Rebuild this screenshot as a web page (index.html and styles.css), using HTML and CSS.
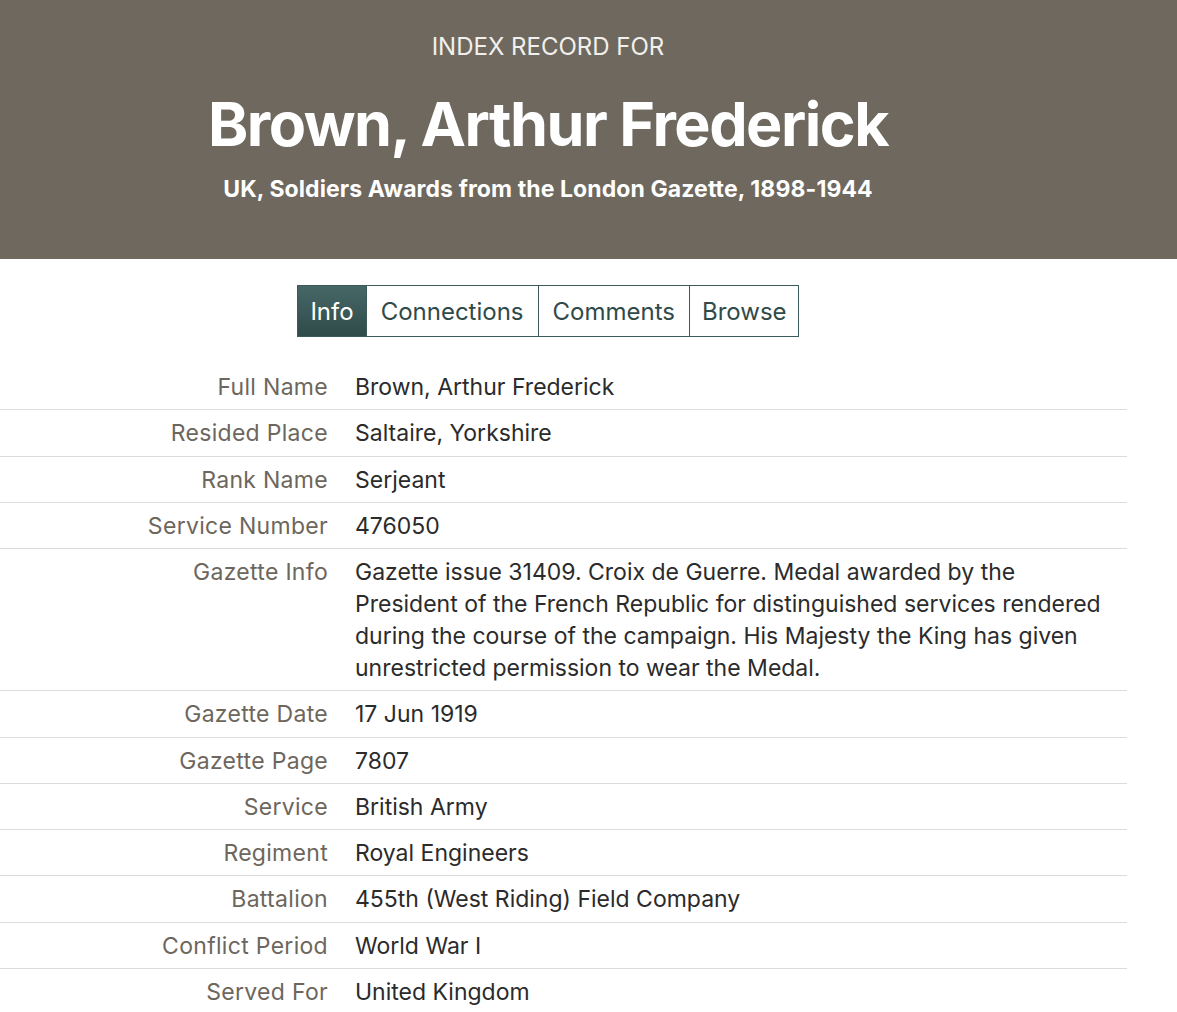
FILE: index.html
```html
<!DOCTYPE html>
<html lang="en">
<head>
<meta charset="utf-8">
<title>Brown, Arthur Frederick</title>
<link rel="stylesheet" href="styles.css">
</head>
<body>
<header class="hero">
  <div class="hero-inner">
    <p class="eyebrow">INDEX RECORD FOR</p>
    <h1 class="title">Brown, Arthur Frederick</h1>
    <p class="subtitle">UK, Soldiers Awards from the London Gazette, 1898-1944</p>
  </div>
</header>
<nav class="tabs-wrap">
  <ul class="tabs">
    <li class="tab active">Info</li>
    <li class="tab">Connections</li>
    <li class="tab">Comments</li>
    <li class="tab">Browse</li>
  </ul>
</nav>
<dl class="record">
  <div class="row"><dt>Full Name</dt><dd>Brown, Arthur Frederick</dd></div>
  <div class="row"><dt>Resided Place</dt><dd>Saltaire, Yorkshire</dd></div>
  <div class="row"><dt>Rank Name</dt><dd>Serjeant</dd></div>
  <div class="row"><dt>Service Number</dt><dd>476050</dd></div>
  <div class="row"><dt>Gazette Info</dt><dd>Gazette issue 31409. Croix de Guerre. Medal awarded by the President of the French Republic for distinguished services rendered during the course of the campaign. His Majesty the King has given unrestricted permission to wear the Medal.</dd></div>
  <div class="row"><dt>Gazette Date</dt><dd>17 Jun 1919</dd></div>
  <div class="row"><dt>Gazette Page</dt><dd>7807</dd></div>
  <div class="row"><dt>Service</dt><dd>British Army</dd></div>
  <div class="row"><dt>Regiment</dt><dd>Royal Engineers</dd></div>
  <div class="row"><dt>Battalion</dt><dd>455th (West Riding) Field Company</dd></div>
  <div class="row"><dt>Conflict Period</dt><dd>World War I</dd></div>
  <div class="row"><dt>Served For</dt><dd>United Kingdom</dd></div>
</dl>
</body>
</html>
```

FILE: styles.css
```css
* { box-sizing: border-box; }
html, body { margin: 0; padding: 0; background: #fff; }
body {
  font-family: Inter, "Liberation Sans", Arial, sans-serif;
  color: #2b2b2b;
}
.hero {
  background: #6e685e;
  height: 259px;
  color: #fff;
}
.hero-inner {
  width: 1096px;
  text-align: center;
  padding-top: 33px;
}
.eyebrow {
  margin: 0;
  font-size: 24px;
  line-height: 28px;
  font-weight: 400;
  color: #f2f0ec;
}
.title {
  margin: 27px 0 0;
  font-size: 61px;
  line-height: 72px;
  font-weight: 700;
  letter-spacing: -1.5px;
}
.subtitle {
  margin: 15px 0 0;
  font-size: 23px;
  line-height: 28px;
  font-weight: 700;
  letter-spacing: 0.1px;
}
.tabs-wrap {
  width: 1096px;
  display: flex;
  justify-content: center;
  padding-top: 26px;
}
.tabs {
  list-style: none;
  margin: 0;
  padding: 0;
  display: flex;
  border: 1px solid #3d5b5a;
}
.tab {
  height: 50px;
  display: flex;
  align-items: center;
  padding: 0 14px;
  font-size: 24px;
  color: #2f4a49;
  border-left: 1px solid #3d5b5a;
}
.tab:first-child { border-left: 0; padding: 0 12px; }
.tab:last-child { padding: 0 11px 0 12px; }
.tab.active {
  background: linear-gradient(#466766, #2f4b4a);
  color: #fff;
}
.record {
  width: 1127px;
  margin: 27px 0 0;
  padding: 0;
}
.row {
  display: grid;
  grid-template-columns: 328px 1fr;
  column-gap: 27px;
  padding: 7px 0 6.25px;
  border-bottom: 1px solid #dcdcdc;
}
.row:last-child { border-bottom: 0; }
dt {
  text-align: right;
  font-size: 23px;
  line-height: 32px;
  color: #6d665d;
  letter-spacing: 0.3px;
}
dd {
  margin: 0;
  padding-right: 10px;
  font-size: 23px;
  line-height: 32px;
  color: #2b2b2b;
}
```
